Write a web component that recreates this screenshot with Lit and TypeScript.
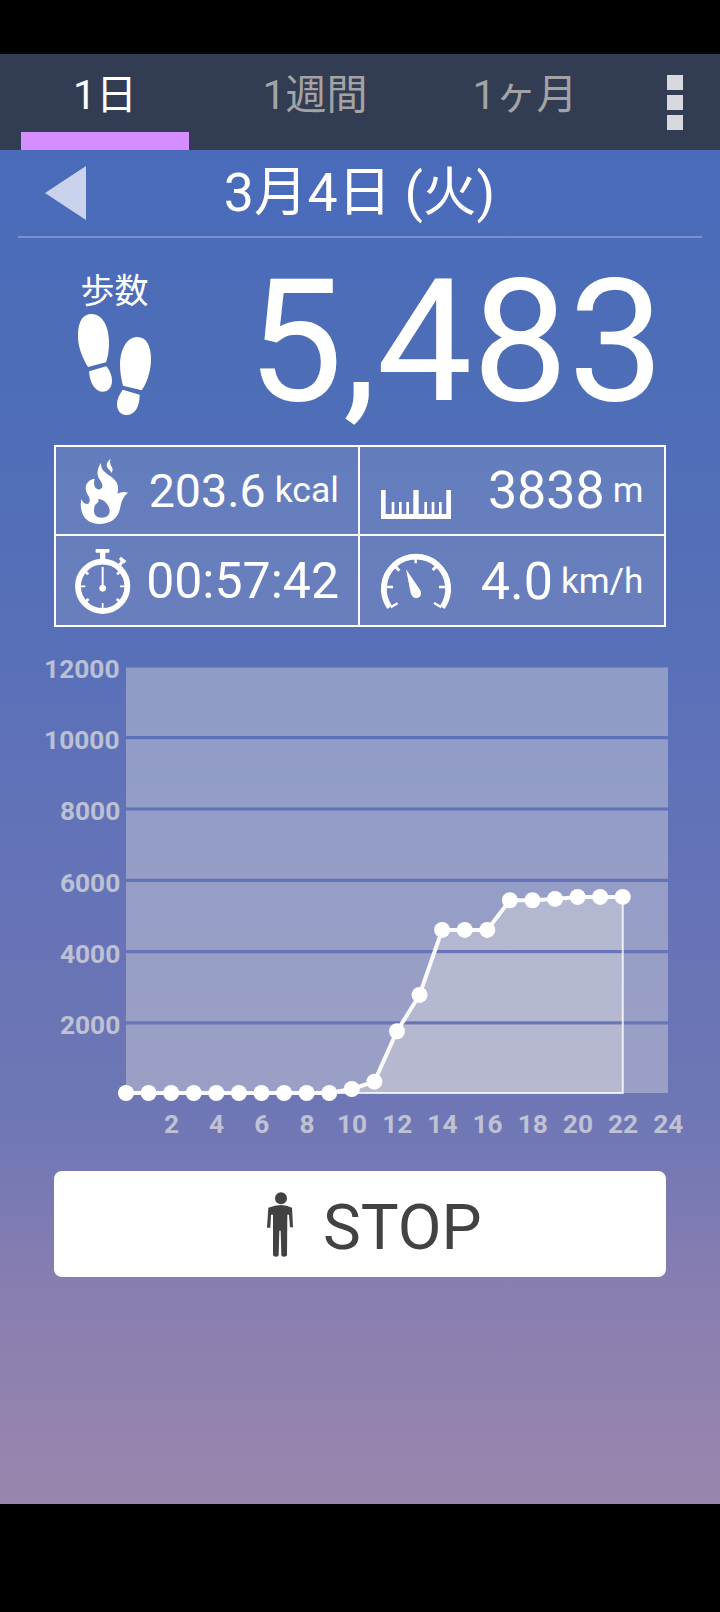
import { LitElement, html, css, svg } from "lit";
import { customElement } from "lit/decorators.js";

const steps = [0, 0, 0, 0, 0, 0, 0, 0, 0, 0, 113, 319, 1740, 2764, 4597, 4597, 4597, 5434, 5434, 5471, 5527, 5527, 5527];
const X0 = 126, DX = 22.58, Y0 = 1093, BAND = 71.3;
const px = (h: number) => X0 + h * DX;
const py = (v: number) => Y0 - (v * BAND) / 2010;

const flame = svg`<path fill-rule="evenodd" d="M183 98C170 118 170 135 178 147C188 160 190 170 183 176C175 182 165 176 163 166C161 158 163 152 164 146C150 148 137 158 137 175C137 190 148 198 149 208C150 217 146 222 141 222C132 221 126 214 124 207C121 222 122 240 128 253C137 272 155 282 178 282C208 282 232 268 239 240C244 220 244 205 264 188C250 184 242 188 232 191C236 178 235 163 226 152C216 140 192 128 187 118C184 112 183 105 183 98ZM175 207C192 207 209 226 209 243C209 256 199 263 185 263C171 263 162 256 162 243C162 234 163 225 169 221C175 219 176 213 175 207ZM212 87C203 93 198 102 201 110C204 119 212 120 214 129C220 121 218 115 214 109C210 103 209 95 212 87Z"/>`;

const watch = svg`<circle cx="188" cy="469" r="74" fill="none" stroke="#fff" stroke-width="17.5"/>
  <path d="M168 357H207Q211 362 207 368H196V388H180V368H168Q164 362 168 357ZM236 401 242 394 237 386 243 380 259 393 254 400 249 400 243 409Z"/>
  <path d="M188 411V468" stroke="#fff" stroke-width="6"/><circle cx="188" cy="475" r="10"/>
  <path d="M119 469H136M240 469H257M188 519V538" stroke="#fff" stroke-width="5"/>
  <path d="M137 426 145 433M239 426 231 433M137 514 146 507M239 514 230 507" stroke="#fff" stroke-width="8"/>`;

const ruler = svg`<path d="M93 180H107V252H125V216H133V252H147V216H155V252H169V216H177V252H190V180H206V252H223V216H231V252H245V216H253V252H267V216H275V252H289V180H303V267H93Z"/>`;

const gauge = svg`<path d="M119 532A96.5 96.5 0 1 1 277 532" fill="none" stroke="#fff" stroke-width="17.5"/>
  <path d="M107 471H129M289 471H267M197 380V400M122 532 143 520M274 532 252 519" stroke="#fff" stroke-width="7"/>
  <path d="M134 407 148 422M262 407 248 420" stroke="#fff" stroke-width="9"/>
  <path d="M168 418 210 479C217 492 211 503 200 504C190 504 184 497 182 488Z"/>`;

@customElement("app-root")
export class AppRoot extends LitElement {
  static styles = css`
    :host { display: block; font-family: Roboto, "Noto Sans CJK JP", sans-serif; color: #fff; }
    svg { display: block; flex: none; }
    .screen { box-sizing: border-box; width: 720px; height: 1612px; background: #000; padding: 54px 0 108px; display: flex; flex-direction: column; }
    .tabs { height: 96px; background: #323c53; display: flex; padding: 0 21px; box-sizing: border-box; }
    .tab { box-sizing: border-box; width: 168px; margin-right: 42px; height: 96px; text-align: center; font-size: 41px; line-height: 82px; color: #a3a3a3; border-bottom: 18px solid transparent; white-space: nowrap; }
    .tab.on { color: #fff; border-color: #d58eff; }
    .more { width: 16px; padding-top: 20.5px; margin-left: 16px; display: flex; flex-direction: column; gap: 5px; }
    .more i { display: block; height: 15px; background: #d7d9df; }
    .body { flex: 1; background: linear-gradient(#496bba 0%, #4f6eb7 20%, #5870b8 37%, #6072b8 46%, #6673b7 56%, #6f77b5 72%, #887eb1 84%, #9986ad 100%); }
    .date { display: flex; align-items: center; height: 86px; margin: 0 18px; border-bottom: 2px solid #7790cb; }
    .date svg { margin-left: 27px; width: 42px; height: 54px; }
    .date span { flex: 1; text-align: center; font-size: 53.6px; line-height: 86px; height: 86px; margin-right: 70px; }
    .count { display: flex; height: 207px; }
    .label { width: 229px; display: flex; flex-direction: column; align-items: center; padding-top: 31px; box-sizing: border-box; }
    .label span { font-size: 34px; line-height: 45px; }
    .big { flex: 1; text-align: right; padding-right: 56px; font-size: 170.5px; line-height: 208px; white-space: nowrap; }
    .grid { box-sizing: border-box; width: 612px; height: 182px; margin: 0 54px; display: grid; grid-template: 87px 91px / 302px 306px; border: 2px solid #fff; }
    .cell { box-sizing: border-box; display: flex; align-items: flex-start; justify-content: space-between; padding-right: 19px; background: rgba(223, 223, 223, .14); white-space: nowrap; fill: #fff; }
    .cell.right { border-left: 2px solid #fff; padding-right: 20.5px; }
    .low { border-top: 2px solid #fff; }
    .unit { line-height: 0; }
    .kcal { font-size: 46.6px; line-height: 89px; }
    .kcal .unit { font-size: 35.6px; vertical-align: 5px; margin-left: 9px; }
    .dist { font-size: 52px; line-height: 88px; }
    .dist .unit { font-size: 35px; vertical-align: 6px; margin-left: 8px; }
    .time { font-size: 50px; line-height: 91px; }
    .speed { font-size: 52px; line-height: 92px; }
    .speed .unit { font-size: 35.2px; vertical-align: 6px; margin-left: 8px; }
    .plot { width: 720px; height: 544px; }
    .axis { font: 700 26.3px Roboto, sans-serif; fill: rgba(224, 224, 224, .73); }
    .stop { width: 612px; height: 106px; margin: 0 54px; border-radius: 8px; background: #fff; color: #424242; fill: #424242; display: flex; align-items: center; }
    .stop svg { margin: 0 0 0 213px; }
    .stop span { font-size: 63.6px; line-height: 76px; margin: 7px 0 0 30px; }
  `;

  render() {
    const line = steps.map((v, i) => px(i) + "," + py(v)).join(" ");
    const last = px(steps.length - 1);
    return html`<div class="screen">
      <div class="tabs"><div class="tab on">1日</div><div class="tab">1週間</div><div class="tab">1ヶ月</div><div class="more"><i></i><i></i><i></i></div></div>
      <div class="body">
        <div class="date"><svg viewBox="0 0 42 54"><path d="M0 27 41 0V54Z" fill="#cad3eb"/></svg><span>3月4日 (火)</span></div>
        <div class="count">
          <div class="label"><span>歩数</span>
            <svg width="73" height="101" viewBox="114 162 219 303" fill="#fff"><path d="M114 222C115 185 128 162 155 162C190 162 207 205 207 245C207 275 203 292 198 307L144 321C128 295 112 260 114 222ZM147 334 199 319C207 328 216 345 216 362C216 380 207 395 187 395C163 395 149 365 147 334ZM291 231C320 231 333 258 333 298C333 330 322 368 305 391L249 377C242 350 240 330 240 310C242 265 262 231 291 231ZM248 389 299 404C299 440 285 465 259 465C240 465 231 450 231 433C231 415 240 402 248 389Z"/></svg>
          </div>
          <div class="big">5,483</div>
        </div>
        <div class="grid">
          <div class="cell"><svg width="87" height="87" viewBox="48 51 261 261">${flame}</svg><div class="kcal">203.6<span class="unit">kcal</span></div></div>
          <div class="cell right"><svg width="100" height="87" viewBox="30 51 300 261">${ruler}</svg><div class="dist">3838<span class="unit">m</span></div></div>
          <div class="cell low"><svg width="89" height="89" viewBox="48 318 267 267">${watch}</svg><div class="time">00:57:42</div></div>
          <div class="cell low right"><svg width="100" height="89" viewBox="30 318 300 267">${gauge}</svg><div class="speed">4.0<span class="unit">km/h</span></div></div>
        </div>
        <svg class="plot" viewBox="0 627 720 544">
          <clipPath id="bands">${[0, 1, 2, 3, 4, 5].map(i => {
            const top = i ? 667.6 + i * BAND + 0.4 : 667.4;
            return svg`<rect x=${X0} y=${top} width="542" height=${(i < 5 ? 664.6 + (i + 1) * BAND + 0.2 : Y0) - top}/>`;
          })}</clipPath>
          <g clip-path="url(#bands)" fill="rgba(223,223,223,.4)">
            <rect x=${X0} y="660" width="542" height="440"/>
            <polygon points=${`${line} ${last},${Y0} ${X0},${Y0}`}/>
          </g>
          <path d=${`M${X0} ${Y0}H${last}V${py(steps[steps.length - 1])}`} fill="none" stroke="rgba(255,255,255,.8)" stroke-width="2"/>
          <polyline points=${line} fill="none" stroke="#fafafa" stroke-width="4"/>
          ${steps.map((v, i) => svg`<circle cx=${px(i)} cy=${py(v)} r="8" fill="#fff"/>`)}
          ${[0, 1, 2, 3, 4, 5].map(i => svg`<text class="axis" text-anchor="end" x=${i < 2 ? 119.5 : 120.3} y=${677.6 + i * 71.35}>${12000 - i * 2000}</text>`)}
          ${[2, 4, 6, 8, 10, 12, 14, 16, 18, 20, 22, 24].map(h => svg`<text class="axis" text-anchor="middle" x=${px(h) + 0.3} y="1132.6">${h}</text>`)}
        </svg>
        <div class="stop">
          <svg width="26" height="65" viewBox="711 694 78 195"><circle cx="753" cy="713" r="18"/><path d="M715 741Q735 733 753 733Q770 733 786 741L789 800H780L777 762H772L771 884Q770 888 762 888Q754 888 754 884L752 810H748L746 884Q746 888 738 888Q730 888 729 884V762H723L721 801H711Z"/></svg>
          <span>STOP</span>
        </div>
      </div>
    </div>`;
  }
}
